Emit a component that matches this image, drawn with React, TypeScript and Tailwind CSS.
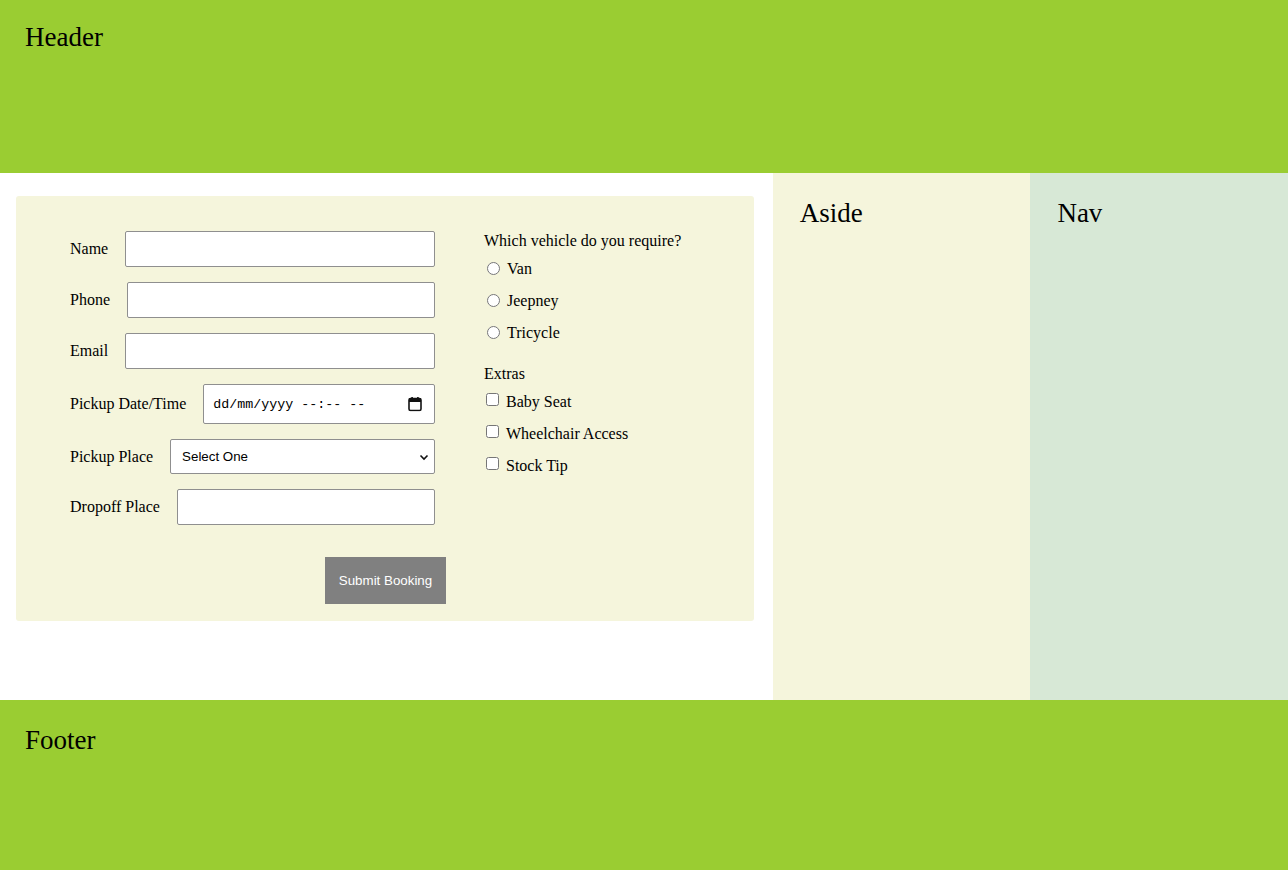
import React from 'react';

const serif = "font-['Liberation_Serif','Times_New_Roman',serif]";

const Field: React.FC<{ label: string; children: React.ReactNode }> = ({ label, children }) => (
  <div className="flex items-center gap-[17px] w-[365px]">
    <label className="whitespace-nowrap text-[16px]">{label}</label>
    <div className="flex-1">{children}</div>
  </div>
);

const inputCls = 'block w-full h-[36px] bg-white border border-[#8f8f8f] rounded-[2px] px-2';

const App: React.FC = () => {
  return (
    <div className={`${serif} text-black w-full`}>
      {/* Header */}
      <header className="h-[173px] bg-[#9acd32] px-[25px] pt-[22px]">
        <h1 className="text-[27px] leading-[30px]">Header</h1>
      </header>

      <div className="grid grid-cols-[3fr_1fr_1fr] h-[527px]">
        {/* Main */}
        <main className="bg-white pt-[23px] pl-[16px] pr-[19px]">
          <form className="bg-[#f5f5dc] rounded-[3px] pt-[35px] pb-[17px] pl-[54px] flex gap-[38px]">
            <div className="w-[376px] flex flex-col">
              <div className="flex flex-col gap-[15px]">
                <Field label="Name">
                  <input type="text" className={inputCls} />
                </Field>
                <Field label="Phone">
                  <input type="tel" className={inputCls} />
                </Field>
                <Field label="Email">
                  <input type="email" className={inputCls} />
                </Field>
                <Field label="Pickup Date/Time">
                  <div className="relative">
                    <input
                      type="text"
                      placeholder="dd/mm/yyyy --:-- --"
                      className="block w-full h-[40px] bg-white border border-[#8f8f8f] rounded-[2px] pl-[9px] pr-[30px] font-['Liberation_Mono','Courier_New',monospace] text-[13.33px] placeholder:text-black"
                    />
                    <svg
                      className="absolute right-[13px] top-1/2 -translate-y-1/2 pointer-events-none"
                      width="14"
                      height="15"
                      viewBox="0 0 14 15"
                    >
                      <rect x="1" y="2" width="12" height="12" rx="1.5" fill="none" stroke="#111" strokeWidth="1.6" />
                      <rect x="1" y="2" width="12" height="3.5" fill="#111" />
                      <rect x="3.3" y="0.5" width="1.6" height="3" fill="#111" />
                      <rect x="9.1" y="0.5" width="1.6" height="3" fill="#111" />
                    </svg>
                  </div>
                </Field>
                <Field label="Pickup Place">
                  <div className="relative">
                    <select className="block w-full h-[35px] appearance-none bg-white border border-[#8f8f8f] rounded-[2px] pl-[11px] font-['Liberation_Sans',Arial,sans-serif] text-[13.33px]">
                      <option>Select One</option>
                      <option>Airport</option>
                      <option>Bus Terminal</option>
                    </select>
                    <svg
                      className="absolute right-[6px] top-1/2 -translate-y-1/2 pointer-events-none"
                      width="10"
                      height="10"
                      viewBox="0 0 10 10"
                    >
                      <path d="M1.5 3.5 L5 7 L8.5 3.5" fill="none" stroke="#111" strokeWidth="1.6" />
                    </svg>
                  </div>
                </Field>
                <Field label="Dropoff Place">
                  <input type="text" className={inputCls} />
                </Field>
              </div>
              <button
                type="button"
                className="self-end mt-[32px] h-[47px] w-[121px] bg-[#808080] text-white font-['Liberation_Sans',Arial,sans-serif] text-[13.33px]"
              >
                Submit Booking
              </button>
            </div>

            <div className="flex flex-col text-[16px] leading-[18px] pt-[1px]">
              <p>Which vehicle do you require?</p>
              {['Van', 'Jeepney', 'Tricycle'].map((v, i) => (
                <label key={v} className={`flex items-center ${i === 0 ? 'mt-[10px]' : 'mt-[14px]'}`}>
                  <input type="radio" name="vehicle" className="ml-[3px] mr-[7px] w-[13px] h-[13px] -mt-[2px]" />
                  {v}
                </label>
              ))}
              <p className="mt-[23px]">Extras</p>
              {['Baby Seat', 'Wheelchair Access', 'Stock Tip'].map((v, i) => (
                <label key={v} className={`flex items-center ${i === 0 ? 'mt-[10px]' : 'mt-[14px]'}`}>
                  <input type="checkbox" className="ml-[2px] mr-[7px] w-[13px] h-[13px] -mt-[5px]" />
                  {v}
                </label>
              ))}
            </div>
          </form>
        </main>

        {/* Aside */}
        <aside className="bg-[#f5f5dc] pl-[27px] pt-[25px]">
          <h2 className="text-[27px] leading-[30px]">Aside</h2>
        </aside>

        {/* Nav */}
        <nav className="bg-[#d7e8d6] pl-[27px] pt-[25px]">
          <h2 className="text-[27px] leading-[30px]">Nav</h2>
        </nav>
      </div>

      {/* Footer */}
      <footer className="h-[170px] bg-[#9acd32] px-[25px] pt-[25px]">
        <h2 className="text-[27px] leading-[30px]">Footer</h2>
      </footer>
    </div>
  );
};

export default App;
